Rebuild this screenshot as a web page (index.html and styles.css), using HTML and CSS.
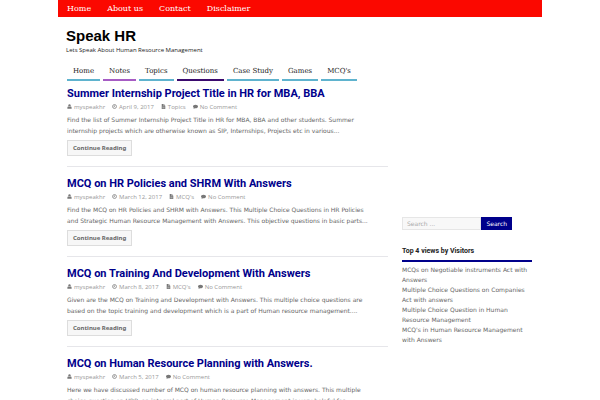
FILE: index.html
```
<!DOCTYPE html>
<html lang="en">
<head>
  <meta charset="UTF-8">
  <meta name="viewport" content="width=device-width, initial-scale=1.0">
  <title>Speak HR</title>
  <link rel="stylesheet" href="styles.css">
</head>
<body>
  <!-- Icons used in the post meta -->
  <svg class="sprite" aria-hidden="true">
    <symbol id="user" viewBox="0 0 14 14"><circle cx="7" cy="4" r="3.3"/><path d="M1 13V11c0-3 1.500-4 3-4 2 1.500 4 1.500 6 0 1.500 0 3 1 3 4v2z"/></symbol>
    <symbol id="clock" viewBox="0 0 14 14"><path fill="none" stroke="currentColor" stroke-width="2" d="M7 1.500a5.500 5.500 0 1 0 0 11 5.500 5.500 0 1 0 0-11M7 4v3.500H4.500"/></symbol>
    <symbol id="file" viewBox="0 0 14 14"><path d="M2 0h5v5h5v9H2zM8 0l4 4H8z"/><path stroke="#fff" d="M4 8.500h6M4 11h6"/></symbol>
    <symbol id="comment" viewBox="0 0 14 14"><path d="M7 2c4 0 7 2 7 5s-3 5-7 5c-1 0-1.500 0-2-.2C4 13 2 13.500 1 13.500c1-1 1.500-2 1.200-3C1 9.500 0 8.500 0 7c0-3 3-5 7-5z"/></symbol>
  </svg>

  <div class="container">
    <nav class="top-nav">
      <a href="#">Home</a>
      <a href="#">About us</a>
      <a href="#">Contact</a>
      <a href="#">Disclaimer</a>
    </nav>

    <header class="header">
      <h1 class="site-title"><a href="#">Speak HR</a></h1>
      <p class="tagline">Lets Speak About Human Resource Management</p>
    </header>

    <nav class="main-nav">
      <a href="#">Home</a>
      <a class="purple" href="#">Notes</a>
      <a href="#">Topics</a>
      <a class="dark" href="#">Questions</a>
      <a href="#">Case Study</a>
      <a href="#">Games</a>
      <a href="#">MCQ's</a>
    </nav>

    <div class="content">
      <main class="posts">
        <article class="post">
          <h2><a href="#">Summer Internship Project Title in HR for MBA, BBA</a></h2>
          <div class="meta">
            <span><svg><use href="#user"/></svg>myspeakhr</span>
            <span><svg><use href="#clock"/></svg>April 9, 2017</span>
            <span><svg><use href="#file"/></svg>Topics</span>
            <span><svg><use href="#comment"/></svg>No Comment</span>
          </div>
          <p>Find the list of Summer Internship Project Title in HR for MBA, BBA and other students. Summer internship projects which are otherwise known as SIP, Internships, Projects etc in various...</p>
          <a class="more" href="#">Continue Reading</a>
        </article>

        <article class="post">
          <h2><a href="#">MCQ on HR Policies and SHRM With Answers</a></h2>
          <div class="meta">
            <span><svg><use href="#user"/></svg>myspeakhr</span>
            <span><svg><use href="#clock"/></svg>March 12, 2017</span>
            <span><svg><use href="#file"/></svg>MCQ's</span>
            <span><svg><use href="#comment"/></svg>No Comment</span>
          </div>
          <p>Find the MCQ on HR Policies and SHRM with Answers. This Multiple Choice Questions in HR Policies and Strategic Human Resource Management with Answers. This objective questions in basic parts...</p>
          <a class="more" href="#">Continue Reading</a>
        </article>

        <article class="post">
          <h2><a href="#">MCQ on Training And Development With Answers</a></h2>
          <div class="meta">
            <span><svg><use href="#user"/></svg>myspeakhr</span>
            <span><svg><use href="#clock"/></svg>March 8, 2017</span>
            <span><svg><use href="#file"/></svg>MCQ's</span>
            <span><svg><use href="#comment"/></svg>No Comment</span>
          </div>
          <p>Given are the MCQ on Training and Development with Answers. This multiple choice questions are based on the topic training and development which is a part of Human resource management....</p>
          <a class="more" href="#">Continue Reading</a>
        </article>

        <article class="post">
          <h2><a href="#">MCQ on Human Resource Planning with Answers.</a></h2>
          <div class="meta">
            <span><svg><use href="#user"/></svg>myspeakhr</span>
            <span><svg><use href="#clock"/></svg>March 5, 2017</span>
            <span><svg><use href="#comment"/></svg>No Comment</span>
          </div>
          <p>Here we have discussed number of MCQ on human resource planning with answers. This multiple choice question on HRP, an integral part of Human Resource Management is very helpful for</p>
        </article>
      </main>

      <aside class="sidebar">
        <form class="search">
          <input type="search" placeholder="Search ..." aria-label="Search">
          <button type="submit">Search</button>
        </form>
        <h3>Top 4 views by Visitors</h3>
        <ul>
          <li><a href="#">MCQs on Negotiable instruments Act with Answers</a></li>
          <li><a href="#">Multiple Choice Questions on Companies Act with answers</a></li>
          <li><a href="#">Multiple Choice Question in Human Resource Management</a></li>
          <li><a href="#">MCQ's in Human Resource Management with Answers</a></li>
        </ul>
      </aside>
    </div>
  </div>
</body>
</html>
```
FILE: styles.css
```
* {
  box-sizing: border-box;
}

body {
  margin: 0;
  background: #fff;
  color: #666;
  font-family: "DejaVu Sans", sans-serif;
  font-size: 6px;
  line-height: 10px;
}

a {
  color: inherit;
  text-decoration: none;
}

h1, h2, h3, p, ul {
  margin: 0;
  padding: 0;
}

.sprite {
  display: none;
}

.container {
  max-width: 484px;
  margin: 0 auto;
}

.top-nav {
  display: flex;
  gap: 16px;
  padding: 4px 9px 3px;
  background: #fb0800;
  color: #fff;
  font-family: "DejaVu Serif", serif;
  font-size: 8px;
}

.header {
  padding: 10px 8px 0;
}

.site-title {
  color: #000;
  font: bold 15px/18px "Liberation Sans", sans-serif;
}

.tagline {
  color: #222;
  font-family: "Open Sans", sans-serif;
}

.main-nav {
  display: flex;
  gap: 3px;
  padding: 11px 9px 0;
  color: #222;
  font-family: "DejaVu Serif", serif;
  font-size: 7px;
}

.main-nav a {
  padding: 0 6px 3px;
  border-bottom: 2px solid #5fb3ce;
}

.main-nav .purple {
  border-color: #a65cc4;
}

.main-nav .dark {
  border-color: #3b0a6e;
}

.content {
  display: flex;
  gap: 14px;
  padding: 6px 10px 0 9px;
}

.posts {
  flex: 1;
}

.post {
  margin-bottom: 10px;
  padding-bottom: 10px;
  border-bottom: 1px solid #e6e6ea;
}

.post h2 {
  margin-bottom: 1px;
  color: #00008b;
  font: bold 11px/14px Roboto, sans-serif;
}

.meta {
  display: flex;
  gap: 7px;
  margin-bottom: 2px;
  color: #999;
  font-family: "Open Sans", sans-serif;
}

.meta svg {
  width: 5px;
  height: 5px;
  margin-right: 2px;
  fill: #777;
  color: #777;
}

.post p {
  margin-bottom: 4px;
  padding-right: 15px;
  line-height: 11px;
}

.more {
  display: block;
  width: fit-content;
  padding: 2px 5px;
  border: 1px solid #ddd;
  background: #f7f7f7;
  font-family: "Noto Sans", sans-serif;
  font-weight: bold;
}

.sidebar {
  width: 130px;
  padding-top: 130px;
}

.search {
  display: flex;
  width: 110px;
  height: 13px;
}

.search input {
  flex: 1;
  min-width: 0;
  padding: 0 4px;
  border: 1px solid #e6e6e6;
  background: #f8f8f8;
  font: inherit;
}

.search input::placeholder {
  color: #aaa;
}

.search button {
  padding: 0 5px;
  border: 0;
  background: #00008b;
  color: #fff;
  font: inherit;
}

.sidebar h3 {
  margin: 16px 0 3px;
  padding-bottom: 4px;
  border-bottom: 2px solid #00008b;
  color: #222;
  font: bold 7px/10px Roboto, sans-serif;
}

.sidebar ul {
  list-style: none;
}
```
